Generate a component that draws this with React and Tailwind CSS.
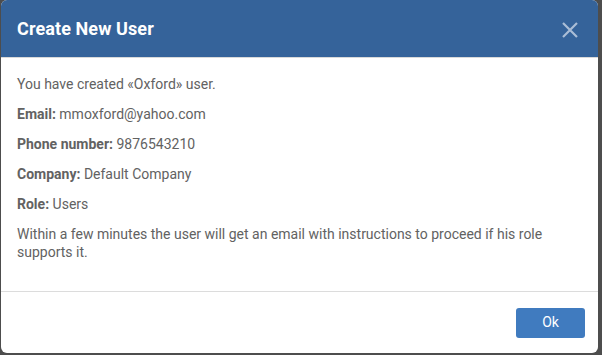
import React from 'react';

const Field = ({ label, value }) => (
  <p className="mb-[12px] leading-[18px]">
    <span className="font-bold">{label}:</span> {value}
  </p>
);

const App = () => {
  return (
    <div className="w-[602px] h-[355px] bg-[#4d4d4d] pl-px pt-0 overflow-hidden font-['Roboto',sans-serif]">
      <div className="w-[597px] h-[353px] bg-white rounded-md overflow-hidden flex flex-col">
        <div className="h-[58px] bg-[#35639a] flex items-center justify-between pl-4 pr-5 border-b border-[#d9d9d9] shrink-0">
          <h2 className="text-white text-[18px] font-bold tracking-[0.1px]">Create New User</h2>
          <svg width="16" height="16" viewBox="0 0 16 16" className="mt-[2px]">
            <path d="M1 1L15 15M15 1L1 15" stroke="#aabdd6" strokeWidth="2.2" />
          </svg>
        </div>
        <div className="flex-1 px-4 pt-[17px] text-[14px] text-[#626262]">
          <p className="mb-[12px] leading-[18px]">You have created «Oxford» user.</p>
          <Field label="Email" value="mmoxford@yahoo.com" />
          <Field label="Phone number" value="9876543210" />
          <Field label="Company" value="Default Company" />
          <Field label="Role" value="Users" />
          <p className="leading-[18px] pr-[30px]">
            Within a few minutes the user will get an email with instructions to proceed if his role supports it.
          </p>
        </div>
        <div className="h-[62px] border-t border-[#dcdcdc] flex items-center justify-end pr-[13px] shrink-0">
          <button className="w-[69px] h-[30px] bg-[#407bbf] rounded-[3px] text-white text-[14px]">Ok</button>
        </div>
      </div>
    </div>
  );
};

export default App;
